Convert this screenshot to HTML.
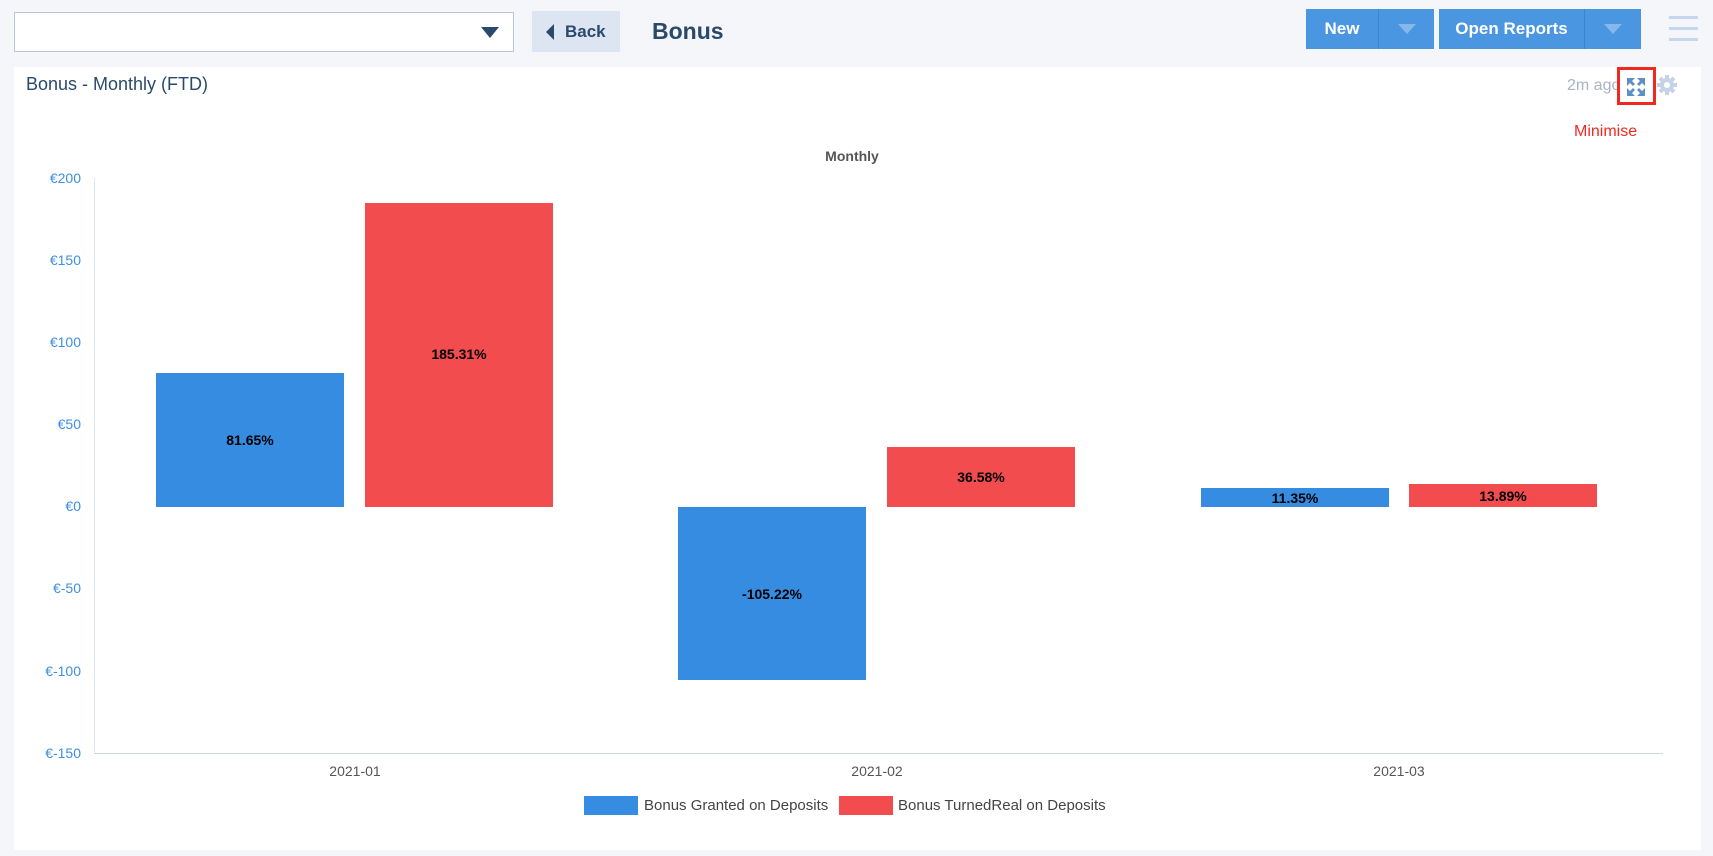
<!DOCTYPE html>
<html><head><meta charset="utf-8"><style>
*{margin:0;padding:0;box-sizing:border-box}
body{width:1713px;height:856px;background:#f4f6fa;font-family:"Liberation Sans",sans-serif;position:relative;overflow:hidden}
.a{position:absolute}
.btn{background:#4a96e0;color:#fff;font-weight:bold;font-size:17px;display:flex;align-items:center}
.yl{position:absolute;right:1632px;color:#3d8fe2;font-size:14px;transform:translateY(-50%)}
.bar{position:absolute;display:flex;align-items:center;justify-content:center;font-weight:bold;font-size:14px;color:#000}
.xl{position:absolute;top:763px;font-size:14px;color:#555;transform:translateX(-50%)}
</style></head><body>
<div class="a" style="left:14px;top:12px;width:500px;height:40px;background:#fff;border:1px solid #b9c5d9"></div>
<div class="a" style="left:481px;top:27px;width:0;height:0;border-left:9px solid transparent;border-right:9px solid transparent;border-top:11px solid #2a4a6c"></div>
<div class="a" style="left:532px;top:11px;width:88px;height:41px;background:#dde5f3;color:#2a4a6c;font-size:17px;font-weight:bold;display:flex;align-items:center"><span style="display:inline-block;margin-left:14px;margin-right:11px;border-top:8px solid transparent;border-bottom:8px solid transparent;border-right:8px solid #2a4a6c"></span>Back</div>
<div class="a" style="left:652px;top:18px;font-size:23px;font-weight:bold;color:#2a4a6c">Bonus</div>
<div class="a btn" style="left:1306px;top:9px;width:128px;height:40px"><span style="width:72px;text-align:center">New</span><span style="width:1px;height:40px;background:#3f83c9"></span><span style="margin-left:19px;border-left:9px solid transparent;border-right:9px solid transparent;border-top:10px solid #86b8ec"></span></div>
<div class="a btn" style="left:1439px;top:9px;width:202px;height:40px"><span style="width:145px;text-align:center">Open Reports</span><span style="width:1px;height:40px;background:#3f83c9"></span><span style="margin-left:19px;border-left:9px solid transparent;border-right:9px solid transparent;border-top:10px solid #86b8ec"></span></div>
<div class="a" style="left:1669px;top:16px;width:29px;height:3px;background:#c5d6ee"></div>
<div class="a" style="left:1669px;top:27px;width:29px;height:3px;background:#c5d6ee"></div>
<div class="a" style="left:1669px;top:38px;width:29px;height:3px;background:#c5d6ee"></div>
<div class="a" style="left:14px;top:67px;width:1687px;height:783px;background:#fff"></div>
<div class="a" style="left:26px;top:74px;font-size:18px;color:#2a4a6c">Bonus - Monthly (FTD)</div>
<div class="a" style="left:1567px;top:77px;font-size:16px;color:#a9b3c2">2m ago</div>
<div class="a" style="left:1617px;top:67px;width:39px;height:38px;border:3px solid #f0281e;background:rgba(255,255,255,.6)"></div>
<svg class="a" style="left:1625px;top:76px" width="22" height="22" viewBox="0 0 22 22"><g fill="#5e8fc6"><path d="M2 2h8l-3 3 3 3-2 2-3-3-3 3z"/><path d="M20 2v8l-3-3-3 3-2-2 3-3-3-3z"/><path d="M2 20v-8l3 3 3-3 2 2-3 3 3 3z"/><path d="M20 20h-8l3-3-3-3 2-2 3 3 3-3z"/></g></svg>
<svg class="a" style="left:1656px;top:74px" width="22" height="22" viewBox="0 0 22 22"><g fill="#c5d3e6"><circle cx="11" cy="11" r="7"/><g stroke="#c5d3e6" stroke-width="4"><path d="M11 1v20M1 11h20M4 4l14 14M18 4L4 18"/></g></g><circle cx="11" cy="11" r="3" fill="#fff"/></svg>
<div class="a" style="left:1574px;top:123px;font-size:16px;color:#f0281e">Minimise</div>
<div class="a" style="left:852px;top:148px;font-size:14px;font-weight:bold;color:#555;transform:translateX(-50%)">Monthly</div>
<div class="a" style="left:94px;top:178px;width:1px;height:575px;background:#dbe6f4"></div>
<div class="a" style="left:94px;top:753px;width:1569px;height:1px;background:#ccd6e3"></div>
<div class="yl" style="top:178px">€200</div>
<div class="yl" style="top:260px">€150</div>
<div class="yl" style="top:342px">€100</div>
<div class="yl" style="top:424px">€50</div>
<div class="yl" style="top:506px">€0</div>
<div class="yl" style="top:588px">€-50</div>
<div class="yl" style="top:671px">€-100</div>
<div class="yl" style="top:753px">€-150</div>
<div class="bar" style="left:156px;top:373px;width:188px;height:134px;background:#368ce1">81.65%</div>
<div class="bar" style="left:365px;top:203px;width:188px;height:304px;background:#f24c4e;align-items:flex-start;padding-top:143px">185.31%</div>
<div class="bar" style="left:678px;top:507px;width:188px;height:173px;background:#368ce1">-105.22%</div>
<div class="bar" style="left:887px;top:447px;width:188px;height:60px;background:#f24c4e">36.58%</div>
<div class="bar" style="left:1201px;top:488px;width:188px;height:19px;background:#368ce1">11.35%</div>
<div class="bar" style="left:1409px;top:484px;width:188px;height:23px;background:#f24c4e">13.89%</div>
<div class="xl" style="left:355px">2021-01</div>
<div class="xl" style="left:877px">2021-02</div>
<div class="xl" style="left:1399px">2021-03</div>
<div class="a" style="left:584px;top:796px;width:54px;height:19px;background:#368ce1"></div>
<div class="a" style="left:644px;top:797px;font-size:15px;color:#444">Bonus Granted on Deposits</div>
<div class="a" style="left:839px;top:796px;width:54px;height:19px;background:#f24c4e"></div>
<div class="a" style="left:898px;top:797px;font-size:15px;color:#444">Bonus TurnedReal on Deposits</div>
</body></html>
